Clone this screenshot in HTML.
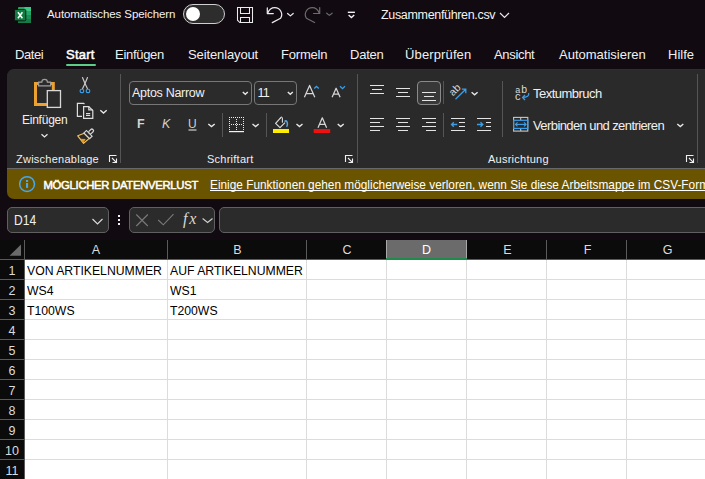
<!DOCTYPE html>
<html><head><meta charset="utf-8">
<style>
*{margin:0;padding:0;box-sizing:border-box}
html,body{width:705px;height:479px;overflow:hidden;background:#110a10}
body{position:relative;font-family:"Liberation Sans",sans-serif;color:#fff}
.a{position:absolute;white-space:nowrap}
.t{position:absolute;white-space:nowrap;line-height:1}
#ov{position:absolute;left:0;top:0;width:705px;height:479px}
#ribbon{position:absolute;left:7px;top:69px;width:720px;height:99px;background:#2a2a2a;border-top-left-radius:7px;border-top:1px solid #2f2f2f}
#msg{position:absolute;left:7px;top:168px;width:720px;height:31px;background:#6b5400;border-top:1px solid #686868;border-bottom-left-radius:7px}
.sep{position:absolute;width:1px;background:#555}
.box{position:absolute;border:1px solid #6a6a6a;border-radius:5px;background:#2b2b2b}
.lbl{position:absolute;white-space:nowrap;line-height:1;font-size:11px;letter-spacing:0.25px;color:#f0f0f0}
#grid{position:absolute;left:0;top:240px;width:705px;height:239px;background:#fff}
.hdr{position:absolute;top:240px;height:19px;background:#0b0b0b;color:#dcdcdc;font-size:12.5px;text-align:center;line-height:20px}
.rh{position:absolute;left:0;width:24px;height:19px;color:#dcdcdc;font-size:12.5px;text-align:center;line-height:22px}
.cell{position:absolute;color:#000;font-size:13.5px;line-height:1;white-space:nowrap;transform:scaleX(0.905);transform-origin:0 0}
</style></head><body>

<!-- Tabs & title text -->
<div class="t" style="left:47px;top:9.3px;font-size:11.5px;letter-spacing:-0.09px;color:#f2f2f2">Automatisches Speichern</div>
<div class="a" style="left:183px;top:4px;width:42px;height:20px;border:1.5px solid #cfcfcf;border-radius:10px;background:#2d2d2d"></div>
<div class="a" style="left:186px;top:7px;width:14px;height:14px;border-radius:7px;background:#fff"></div>
<div class="t" style="left:381px;top:9.2px;font-size:12.5px;letter-spacing:-0.33px;color:#f2f2f2">Zusammenführen.csv</div>

<div class="t" style="left:15px;top:48px;font-size:13px;letter-spacing:-0.4px;color:#f0f0f0">Datei</div>
<div class="t" style="left:66px;top:48px;font-size:13px;letter-spacing:0.25px;color:#fff;-webkit-text-stroke:0.5px #fff">Start</div>
<div class="a" style="left:66px;top:64px;width:30px;height:2px;border-radius:1px;background:#5ccc88"></div>
<div class="t" style="left:115px;top:48px;font-size:13px;letter-spacing:-0.29px;color:#f0f0f0">Einfügen</div>
<div class="t" style="left:188px;top:48px;font-size:13px;letter-spacing:-0.12px;color:#f0f0f0">Seitenlayout</div>
<div class="t" style="left:281px;top:48px;font-size:13px;letter-spacing:-0.2px;color:#f0f0f0">Formeln</div>
<div class="t" style="left:350px;top:48px;font-size:13px;letter-spacing:-0.23px;color:#f0f0f0">Daten</div>
<div class="t" style="left:405px;top:48px;font-size:13px;letter-spacing:0.13px;color:#f0f0f0">Überprüfen</div>
<div class="t" style="left:494px;top:48px;font-size:13px;letter-spacing:-0.32px;color:#f0f0f0">Ansicht</div>
<div class="t" style="left:559px;top:48px;font-size:13px;letter-spacing:0px;color:#f0f0f0">Automatisieren</div>
<div class="t" style="left:668px;top:48px;font-size:13px;letter-spacing:0px;color:#f0f0f0">Hilfe</div>

<div id="ribbon"></div>
<div id="msg"></div>

<!-- ribbon separators -->
<div class="sep" style="left:120px;top:74px;height:89px"></div>
<div class="sep" style="left:357px;top:74px;height:89px"></div>
<div class="sep" style="left:697px;top:74px;height:89px"></div>
<div class="sep" style="left:222px;top:113px;height:24px"></div>
<div class="sep" style="left:266px;top:113px;height:24px"></div>
<div class="sep" style="left:443px;top:81px;height:23px"></div>
<div class="sep" style="left:443px;top:113px;height:24px"></div>
<div class="sep" style="left:502px;top:81px;height:56px"></div>

<!-- clipboard -->
<div class="t" style="left:22px;top:113.7px;font-size:12px;letter-spacing:-0.24px;color:#f0f0f0">Einfügen</div>
<div class="lbl" style="left:16px;top:153.7px">Zwischenablage</div>
<!-- font -->
<div class="box" style="left:129px;top:81px;width:123px;height:24px;border-color:#777;border-radius:4px"></div>
<div class="t" style="left:132px;top:87.3px;font-size:12.5px;letter-spacing:-0.29px;color:#f0f0f0">Aptos Narrow</div>
<div class="box" style="left:254px;top:81px;width:43px;height:24px;border-color:#777;border-radius:4px"></div>
<div class="t" style="left:257.5px;top:87px;font-size:12.5px;letter-spacing:-0.8px;color:#f0f0f0">11</div>
<div class="t" style="left:137px;top:118px;font-size:12.5px;font-weight:bold;color:#d4d4d4">F</div>
<div class="t" style="left:162px;top:118px;font-size:12.5px;font-style:italic;color:#d0d0d0">K</div>
<div class="t" style="left:188px;top:118px;font-size:12px;color:#d0d0d0">U</div>
<div class="lbl" style="left:207px;top:153.7px">Schriftart</div>
<!-- alignment -->
<div class="box" style="left:417px;top:81px;width:24px;height:24px;border-color:#8a8a8a;background:#383838;border-radius:4px"></div>
<div class="t" style="left:533px;top:87px;font-size:13px;letter-spacing:-0.53px;color:#f0f0f0">Textumbruch</div>
<div class="t" style="left:533px;top:118.9px;font-size:13px;letter-spacing:-0.59px;color:#f0f0f0">Verbinden und zentrieren</div>
<div class="lbl" style="left:488px;top:153.7px">Ausrichtung</div>

<!-- message bar text -->
<div class="t" style="left:43.5px;top:179.6px;font-size:11.3px;letter-spacing:-0.3px;-webkit-text-stroke:0.5px #fff;color:#fff">MÖGLICHER DATENVERLUST</div>
<div class="t" style="left:210px;top:179.6px;font-size:11.85px;color:#fff;text-decoration:underline;text-underline-offset:1px;text-decoration-skip-ink:none">Einige Funktionen gehen möglicherweise verloren, wenn Sie diese Arbeitsmappe im CSV-Format speichern</div>

<!-- Formula row -->
<div class="box" style="left:7px;top:207px;width:102px;height:26px;border-color:#606060"></div>
<div class="t" style="left:14px;top:213px;font-size:14px;color:#f0f0f0;transform:scaleX(0.86);transform-origin:0 0">D14</div>
<div class="box" style="left:129px;top:207px;width:86px;height:26px;border-color:#606060"></div>
<div class="box" style="left:219px;top:207px;width:500px;height:26px;border-color:#606060"></div>
<div class="t" style="left:183px;top:211px;font-size:16px;letter-spacing:1.8px;font-family:'Liberation Serif',serif;font-style:italic;color:#d8d8d8">fx</div>

<!-- Grid -->
<div id="grid"></div>
<div class="hdr" style="left:0;width:705px;background:#0b0b0b"></div>
<div class="hdr" style="left:25px;width:142px">A</div>
<div class="hdr" style="left:168px;width:139px">B</div>
<div class="hdr" style="left:308px;width:78px">C</div>
<div class="hdr" style="left:386px;width:81px;background:#6b6b6b;border-left:1px solid #a8a8a8;border-right:1px solid #a8a8a8;color:#fff">D</div>
<div class="hdr" style="left:468px;width:79px">E</div>
<div class="hdr" style="left:548px;width:79px">F</div>
<div class="hdr" style="left:628px;width:79px">G</div>

<svg id="ov" width="705" height="479" viewBox="0 0 705 479">
 <!-- Excel logo -->
 <g>
  <rect x="18" y="7" width="13" height="16" rx="1" fill="#21a366"/>
  <rect x="24.5" y="7" width="6.5" height="4" fill="#39c885"/>
  <rect x="18" y="11" width="13" height="4" fill="#24a86a"/>
  <rect x="18" y="15" width="13" height="4" fill="#1b8f55"/>
  <path d="M18 19H31V22A1 1 0 0 1 30 23H19A1 1 0 0 1 18 22Z" fill="#187a48"/>
  <rect x="14.5" y="9.5" width="11.3" height="11.3" rx="1.2" fill="#107c41" stroke="#0b0b0b" stroke-width="0.8"/>
  <path d="M17.9 12.3L22.4 18.3M22.4 12.3L17.9 18.3" stroke="#fff" stroke-width="1.5"/>
 </g>
 <!-- save -->
 <g fill="none" stroke="#ececec" stroke-width="1.05">
  <path d="M237.5 7.5H252.5V22.5H239.8L237.5 20.2Z"/>
  <path d="M240.5 7.5V13.5H249.5V7.5"/>
  <path d="M240.5 22.5V17.5H249.5V22.5"/>
 </g>
 <!-- undo -->
 <g fill="none" stroke="#ececec" stroke-width="1.25" stroke-linecap="round" stroke-linejoin="round">
  <path d="M267.3 7.9V13.5H273.3"/>
  <path d="M267.8 13C269 9.8 271.5 7.6 274.8 7.6A6.9 6.9 0 0 1 280.6 18.2L272.3 22.6"/>
  <path d="M287.6 13.5L290.4 15.9L293.2 13.5"/>
 </g>
 <g fill="none" stroke="#6c6c6c" stroke-width="1.2" stroke-linecap="round" stroke-linejoin="round">
  <path d="M319.7 7.6V13.5H313.5"/>
  <path d="M319.2 13C318 9.8 315.5 7.6 312.2 7.6A6.9 6.9 0 0 0 306.4 18.2L314.6 22.5"/>
  <path d="M326.7 13.2L329.4 15.4L332.1 13.2"/>
 </g>
 <g fill="none" stroke="#f0f0f0" stroke-width="1.4">
  <path d="M347.8 12.3H354.9"/>
  <path d="M348.6 14.9L351.4 17.5L354.2 14.9"/>
 </g>
 <path d="M500 13L504.5 17.5L509 13" fill="none" stroke="#e8e8e8" stroke-width="1.2"/>

 <!-- paste -->
 <rect x="35.5" y="83.5" width="17.8" height="21" fill="none" stroke="#eda12e" stroke-width="3"/>
 <path d="M38.6 85.8V82.2H41.8A2.8 2.8 0 0 1 47.4 82.2H50.6V85.8Z" fill="#2b2b2b" stroke="#9e9e9e" stroke-width="1.2"/>
 <rect x="47.3" y="90.6" width="13.2" height="16.8" fill="#2b2b2b" stroke="#d8d8d8" stroke-width="1.3"/>
 <path d="M41.5 134.3L44.5 137L47.5 134.3" fill="none" stroke="#e8e8e8" stroke-width="1.3"/>
 <!-- scissors -->
 <g fill="none" stroke="#c8c8c8" stroke-width="1.2" stroke-linecap="round">
  <path d="M82.5 77.6L85 83.5L82.6 88.6"/>
  <path d="M87.5 77.6L85 83.5L87.4 88.6"/>
 </g>
 <rect x="80.2" y="89.2" width="3.4" height="3.4" rx="1.2" fill="#2b2b2b" stroke="#3a9ee8" stroke-width="1.15"/>
 <rect x="86.3" y="89.2" width="3.4" height="3.4" rx="1.2" fill="#2b2b2b" stroke="#3a9ee8" stroke-width="1.15"/>
 <!-- copy -->
 <g fill="none" stroke="#dedede" stroke-width="1.2">
  <path d="M84.5 104L83.7 103.4H77.4V116.4H82"/>
  <path d="M83.6 106.6H88.8L92.8 110.6V118.4H83.6Z"/>
  <path d="M88.8 106.6V109.8H92.6"/>
  <path d="M86 113.5H90.2M86 115.4H90.2"/>
  <path d="M100.3 110.3L103.5 113L106.7 110.3" stroke="#e8e8e8" stroke-width="1.4"/>
 </g>
 <!-- format painter -->
 <g transform="translate(86.75,135.85) rotate(-45)">
  <path d="M0 -3.6L-6.3 -6.4L-7.5 3L0 3.6Z" fill="none" stroke="#f0c060" stroke-width="1.2" stroke-linejoin="round"/>
  <path d="M-7.3 2.6L-6.6 -2.5L-3 1.5Z" fill="#e8981c"/>
  <rect x="0" y="-4" width="3.6" height="8" fill="#2b2b2b" stroke="#d4d4d4" stroke-width="1.2"/>
  <rect x="3.6" y="-1.6" width="5.2" height="3.2" rx="1.4" fill="#2b2b2b" stroke="#d4d4d4" stroke-width="1.2"/>
 </g>
 <!-- launchers -->
 <g fill="none" stroke="#f0f0f0" stroke-width="1.1">
  <path d="M109.5 162V155.5H116.5"/>
  <path d="M112 158L116.3 162.3M112.5 162.5H116.5V158.5"/>
  <path d="M345.5 162V155.5H352.5"/>
  <path d="M348 158L352.3 162.3M348.5 162.5H352.5V158.5"/>
  <path d="M686.5 162V155.5H693.5"/>
  <path d="M689 158L693.3 162.3M689.5 162.5H693.5V158.5"/>
 </g>
 <!-- font chevrons -->
 <g fill="none" stroke="#e8e8e8" stroke-width="1.4">
  <path d="M242.8 92L245.3 94.3L247.8 92"/>
  <path d="M287.8 92L290.3 94.3L292.8 92"/>
  <path d="M208.3 124L211.5 126.6L214.7 124"/>
  <path d="M252.5 124L255.6 126.6L258.7 124"/>
  <path d="M296.5 124L299.5 126.6L302.5 124"/>
  <path d="M337.7 124L340.7 126.6L343.7 124"/>
  <path d="M471.6 92.2L474.6 94.8L477.6 92.2"/>
  <path d="M677.3 124L680.3 126.6L683.3 124"/>
 </g>
 <g fill="none" stroke="#3a9ee8" stroke-width="1.3">
  <path d="M314.2 88.6L316.5 86.5L318.8 88.6"/>
  <path d="M340 86.3L342.5 88.7L345 86.3"/>
 </g>
 <g fill="none" stroke="#d6d6d6" stroke-width="1.25" stroke-linejoin="round">
  <path d="M304.4 97.3L309.6 85.4L314.8 97.3M306.3 93.6H312.9"/>
  <path d="M332.1 97.3L336.1 88.2L340.1 97.3M333.6 94.2H338.6"/>
  <path d="M318 127.7L322.3 117.8L326.6 127.7M319.6 124.4H325"/>
 </g>
 <!-- underline bar under U -->
 <path d="M188.5 130H196.5" stroke="#d0d0d0" stroke-width="1.2"/>
 <!-- borders -->
 <g fill="#ececec"><rect x="229" y="117" width="1" height="1"/><rect x="229" y="119" width="1" height="1"/><rect x="229" y="121" width="1" height="1"/><rect x="229" y="123" width="1" height="1"/><rect x="229" y="125" width="1" height="1"/><rect x="229" y="127" width="1" height="1"/><rect x="229" y="129" width="1" height="1"/><rect x="231" y="117" width="1" height="1"/><rect x="231" y="124" width="1" height="1"/><rect x="233" y="117" width="1" height="1"/><rect x="233" y="124" width="1" height="1"/><rect x="235" y="117" width="1" height="1"/><rect x="235" y="124" width="1" height="1"/><rect x="236" y="119" width="1" height="1"/><rect x="236" y="121" width="1" height="1"/><rect x="236" y="123" width="1" height="1"/><rect x="236" y="125" width="1" height="1"/><rect x="236" y="127" width="1" height="1"/><rect x="236" y="129" width="1" height="1"/><rect x="237" y="117" width="1" height="1"/><rect x="237" y="124" width="1" height="1"/><rect x="239" y="117" width="1" height="1"/><rect x="239" y="124" width="1" height="1"/><rect x="241" y="117" width="1" height="1"/><rect x="241" y="124" width="1" height="1"/><rect x="243" y="117" width="1" height="1"/><rect x="243" y="119" width="1" height="1"/><rect x="243" y="121" width="1" height="1"/><rect x="243" y="123" width="1" height="1"/><rect x="243" y="125" width="1" height="1"/><rect x="243" y="127" width="1" height="1"/><rect x="243" y="129" width="1" height="1"/></g>
 <rect x="229" y="131" width="15" height="1.2" fill="#f4f4f4"/>
 <!-- fill color -->
 <path d="M285 122.6L280 127.6L275.6 123.4L280.6 117.9" fill="none" stroke="#dcdcdc" stroke-width="1.2" stroke-linejoin="round"/>
 <path d="M280.2 118.3Q281.6 115.8 282.4 118.4V122.3" fill="none" stroke="#dcdcdc" stroke-width="1.1" stroke-linecap="round"/>
 <path d="M284.6 121.6Q286.6 119.6 287.4 123.2Q287.7 125.4 286.6 126.8" fill="none" stroke="#5aa8e8" stroke-width="1.5"/>
 <rect x="273" y="129" width="16" height="4" fill="#ffee00"/>
 <rect x="313.7" y="129" width="16.5" height="4" fill="#ee1111"/>

 <!-- alignment lines -->
 <g stroke="#e4e4e4" stroke-width="1.15">
  <path d="M370 85.5H384M372 89.5H382M370 93.5H384"/>
  <path d="M396 88.5H410M398 92.5H408M396 96.5H410"/>
  <path d="M422 92.5H436M424 96.5H434M422 100.5H436"/>
  <path d="M370 118.5H384M370 122.5H380M370 126.5H384M370 130.5H380"/>
  <path d="M396 118.5H410M398 122.5H408M396 126.5H410M398 130.5H408"/>
  <path d="M422 118.5H436M426 122.5H436M422 126.5H436M426 130.5H436"/>
  <path d="M451 118.5H465M459 122.5H465M459 126.5H465M451 130.5H465"/>
  <path d="M477 118.5H491M486 122.5H491M486 126.5H491M477 130.5H491"/>
 </g>
 <g stroke="#3a9ee8" stroke-width="1.3" fill="none">
  <path d="M451.5 124.5H457.3M453.8 122.2L451.5 124.5L453.8 126.8"/>
  <path d="M477 124.5H482.8M480.5 122.2L482.8 124.5L480.5 126.8"/>
  <path d="M455.5 99.3L465.5 89.5M461.8 89.2H465.8V93.2"/>
  <path d="M528.6 93C529.5 95.8 527 97.4 522.6 97.4M525 95L522.6 97.4L525 100"/>
 </g>
 <text transform="translate(457.2,92.3) rotate(-45)" font-size="10.5" fill="#d8d8d8" text-anchor="middle" font-family="Liberation Sans">ab</text>
 <text x="515.3" y="92.8" font-size="9" fill="#dadada" font-family="Liberation Sans">a</text>
 <text x="521.3" y="92.8" font-size="10.5" fill="#dadada" font-family="Liberation Sans">b</text>
 <text x="514.9" y="100.1" font-size="11" fill="#dadada" font-family="Liberation Sans">c</text>
 <!-- merge -->
 <g fill="none" stroke="#c8c8c8" stroke-width="1.1">
  <rect x="513.6" y="117.4" width="14.2" height="13.7"/>
  <path d="M520.7 117.4V120.3M520.7 128.4V131.1"/>
 </g>
 <rect x="513.6" y="120.3" width="14.2" height="8.1" fill="none" stroke="#3a9ee8" stroke-width="1.2"/>
 <g stroke="#3a9ee8" stroke-width="1.2" fill="none">
  <path d="M515.5 124.4H526"/>
  <path d="M517.5 122.4L515.5 124.4L517.5 126.4M524 122.4L526 124.4L524 126.4"/>
 </g>

 <!-- info icon -->
 <circle cx="27.05" cy="184.05" r="7.4" fill="none" stroke="#45a8f0" stroke-width="1.5"/>
 <rect x="26" y="183" width="2.1" height="4.9" fill="#45a8f0"/>
 <rect x="26" y="180" width="2.1" height="2" fill="#45a8f0"/>

 <!-- name box chevron & dots -->
 <path d="M92.5 219L97.5 224L102.5 219" fill="none" stroke="#d8d8d8" stroke-width="1.2"/>
 <rect x="118" y="215" width="2" height="2" fill="#f0f0f0"/>
 <rect x="118" y="219" width="2" height="2" fill="#f0f0f0"/>
 <rect x="118" y="223" width="2" height="2" fill="#f0f0f0"/>
 <g fill="none" stroke="#7a7a7a" stroke-width="1.1">
  <path d="M136.3 214.5L147.8 226M147.8 214.5L136.3 226"/>
  <path d="M158.2 220L163.3 224.8L173.5 214.2"/>
 </g>
 <path d="M202.6 218.5L207.6 222.5L212.5 218.5" fill="none" stroke="#d0d0d0" stroke-width="1.1"/>

 <!-- grid lines -->
 <g stroke="#dcdcdc" stroke-width="1">
  <path d="M24 279.5H705M24 299.5H705M24 319.5H705M24 339.5H705M24 359.5H705M24 379.5H705M24 399.5H705M24 419.5H705M24 439.5H705M24 459.5H705"/>
  <path d="M167.5 260V479M306.5 260V479M386.5 260V479M466.5 260V479M546.5 260V479M626.5 260V479"/>
 </g>
 <rect x="0" y="259" width="24.5" height="220" fill="#0b0b0b"/>
 <g stroke="#5a5a5a" stroke-width="1">
  <path d="M0 259.5H705"/>
  <path d="M24.5 240V479"/>
  <path d="M0 279.5H24M0 299.5H24M0 319.5H24M0 339.5H24M0 359.5H24M0 379.5H24M0 399.5H24M0 419.5H24M0 439.5H24M0 459.5H24"/>
  <path d="M167.5 240V259M306.5 240V259M546.5 240V259M626.5 240V259"/>
 </g>
 <rect x="386" y="258" width="81" height="2" fill="#1f8a4c"/>
 <path d="M21 244.5V255.8H9.5Z" fill="#6a6a6a"/>
</svg>

<!-- row numbers -->
<div class="rh" style="top:260px">1</div>
<div class="rh" style="top:280px">2</div>
<div class="rh" style="top:300px">3</div>
<div class="rh" style="top:320px">4</div>
<div class="rh" style="top:340px">5</div>
<div class="rh" style="top:360px">6</div>
<div class="rh" style="top:380px">7</div>
<div class="rh" style="top:400px">8</div>
<div class="rh" style="top:420px">9</div>
<div class="rh" style="top:440px">10</div>
<div class="rh" style="top:460px">11</div>

<div class="cell" style="left:27px;top:263.5px">VON ARTIKELNUMMER</div>
<div class="cell" style="left:170px;top:263.5px">AUF ARTIKELNUMMER</div>
<div class="cell" style="left:27px;top:283.5px">WS4</div>
<div class="cell" style="left:170px;top:283.5px">WS1</div>
<div class="cell" style="left:27px;top:303.5px">T100WS</div>
<div class="cell" style="left:170px;top:303.5px">T200WS</div>

</body></html>
